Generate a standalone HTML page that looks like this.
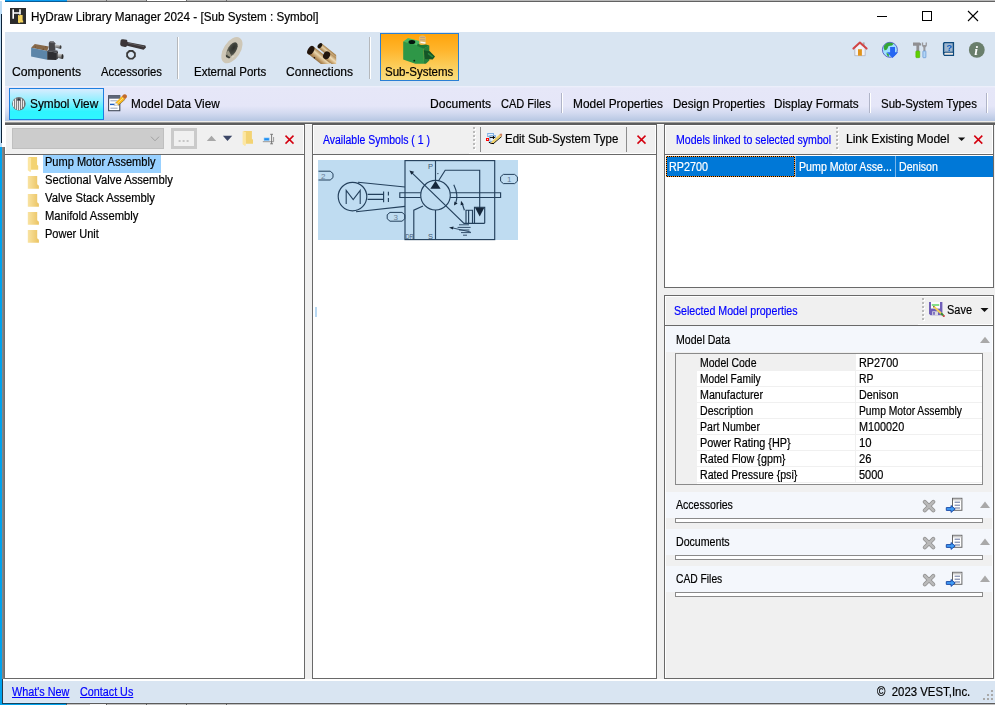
<!DOCTYPE html>
<html><head><meta charset="utf-8"><title>HyDraw Library Manager 2024</title>
<style>
html,body{margin:0;padding:0}
body{width:995px;height:705px;overflow:hidden;position:relative;background:#fff;font-family:"Liberation Sans",sans-serif;}
.a{position:absolute}
.t{-webkit-text-stroke:0.2px;position:absolute;white-space:pre;line-height:16px;height:16px;transform-origin:0 0;color:#000}
.s{font-size:12px}
.m{font-size:11px}
.pnl{position:absolute;border:1px solid #696969;box-sizing:border-box;background:#f0f0f0}
.pnl:before{content:"";position:absolute;left:0;top:0;right:0;bottom:0;border:1px solid #fff}
.wh{position:absolute;background:#fff}
.sec{position:absolute;left:666px;width:326px;height:26px;background:#f4f7fc}
.thin{position:absolute;left:675px;width:308px;height:5px;box-sizing:border-box;border:1px solid #8a8a8a;background:#fff}
.sepv{position:absolute;width:1px;background:#a8a8a8}
.sepv:after{content:"";position:absolute;left:1px;top:0;width:1px;height:100%;background:#fff}
.grip{position:absolute;width:2px;background-image:linear-gradient(#fff 50%,transparent 50%);background-size:2px 4px;margin:1px 0 0 1px}
.grip:after{content:"";position:absolute;left:-1px;top:-1px;width:2px;height:100%;background-image:linear-gradient(#bababa 50%,transparent 50%);background-size:2px 4px;}
</style></head><body>
<!-- window frame edges -->
<div class="a" style="left:5px;top:0;width:990px;height:1px;background:#b9b9b9"></div>
<div class="a" style="left:5px;top:1px;width:990px;height:1px;background:#626262"></div>
<div class="a" style="left:146px;top:0;width:40px;height:1px;background:#fff"></div>
<div class="a" style="left:106px;top:0;width:1px;height:1px;background:#6a6a6a;box-shadow:40px 0 #6a6a6a,80px 0 #6a6a6a,120px 0 #6a6a6a"></div>
<div class="a" style="left:5px;top:0;width:62px;height:2px;background:linear-gradient(#0a9bef 0,#0a9bef 1px,#0b5c96 1px,#0b5c96 2px)"></div>
<div class="a" style="left:0;top:1px;width:2px;height:146px;background:#bcdcf5"></div>
<div class="a" style="left:1px;top:14px;width:1px;height:129px;background:#0c2238"></div>
<div class="a" style="left:0;top:147px;width:2px;height:558px;background:#00a2ed"></div>
<div class="a" style="left:2px;top:147px;width:3px;height:532px;background:linear-gradient(90deg,#8c8c8c,#6a6a6a)"></div>
<div class="a" style="left:2px;top:679px;width:1px;height:25px;background:#2b3a46"></div>
<!-- toolbar 1 -->
<div class="a" style="left:5px;top:32px;width:990px;height:54px;background:#d9e5f2"></div>
<div class="a" style="left:380px;top:33px;width:79px;height:48px;box-sizing:border-box;border:1px solid #2a7fd4;background:linear-gradient(#ffa40c 0%,#ffb52c 35%,#fbd060 75%,#f9de80 100%)"></div>
<div class="sepv" style="left:177px;top:37px;height:42px;background:#b5b8bc"></div>
<div class="sepv" style="left:369px;top:37px;height:42px;background:#b5b8bc"></div>
<!-- toolbar 2 -->
<div class="a" style="left:5px;top:86px;width:990px;height:35px;background:linear-gradient(#eef1fb 0px,#e6e7f8 2px,#e5e6f8 20px,#d3daf0 27px,#b6c6e2 35px)"></div>
<div class="a" style="left:5px;top:121px;width:990px;height:1px;background:#f0eeea"></div>
<div class="a" style="left:5px;top:122px;width:990px;height:3px;background:linear-gradient(#9a9a9a 0,#9a9a9a 1px,#5c5c5c 1px,#5e5e5e 3px)"></div>
<div class="a" style="left:9px;top:88px;width:95px;height:32px;box-sizing:border-box;border:1px solid #1f7fe0;background:linear-gradient(#d8ecff 0%,#8ef0ff 40%,#2ff4ff 75%,#2ff6ff 100%)"></div>
<div class="sepv" style="left:561px;top:93px;height:20px;background:#b0b4c8"></div>
<div class="sepv" style="left:869px;top:93px;height:20px;background:#b0b4c8"></div>
<div class="sepv" style="left:986px;top:93px;height:20px;background:#b0b4c8"></div>
<!-- body -->
<div class="a" style="left:5px;top:125px;width:990px;height:554px;background:#f0f0f0"></div>
<div class="a" style="left:305px;top:124px;width:7px;height:1px;background:#fafafa"></div>
<div class="a" style="left:657px;top:124px;width:7px;height:1px;background:#fafafa"></div>
<!-- left panel -->
<div class="pnl" style="left:5px;top:124px;width:300px;height:555px;border-left:none;border-top-color:#5e5e5e"></div>
<div class="wh" style="left:5px;top:155px;width:299px;height:523px"></div>
<div class="a" style="left:5px;top:154px;width:299px;height:1px;background:#696969"></div>
<div class="a" style="left:12px;top:128px;width:152px;height:21px;box-sizing:border-box;border:1px solid #bfbfbf;background:#cccccc"></div>
<div class="a" style="left:171px;top:128px;width:26px;height:21px;box-sizing:border-box;border:3px solid #cacaca;background:#f0f0f0"></div>
<div class="a" style="left:43px;top:155px;width:118px;height:18px;background:#99d1ff"></div>
<!-- middle panel -->
<div class="pnl" style="left:312px;top:124px;width:345px;height:555px;border-top-color:#5e5e5e"></div>
<div class="wh" style="left:313px;top:155px;width:343px;height:523px"></div>
<div class="a" style="left:313px;top:154px;width:343px;height:1px;background:#696969"></div>
<div class="grip" style="left:473px;top:127px;height:24px"></div>
<div class="a" style="left:480px;top:127px;width:1px;height:25px;background:#8c8c8c"></div>
<div class="a" style="left:626px;top:127px;width:1px;height:25px;background:#8c8c8c"></div>
<!-- right upper panel -->
<div class="pnl" style="left:664px;top:124px;width:330px;height:164px;border-top-color:#5e5e5e"></div>
<div class="wh" style="left:665px;top:155px;width:328px;height:132px"></div>
<div class="a" style="left:665px;top:154px;width:328px;height:1px;background:#696969"></div>
<div class="grip" style="left:836px;top:127px;height:24px"></div>
<div class="a" style="left:666px;top:156px;width:327px;height:21px;background:#0078d7"></div>
<div class="a" style="left:666px;top:156px;width:129px;height:1px;background:repeating-linear-gradient(90deg,#ff9326 0,#ff9326 1px,#000 1px,#000 2px)"></div><div class="a" style="left:666px;top:176px;width:129px;height:1px;background:repeating-linear-gradient(90deg,#ff9326 0,#ff9326 1px,#000 1px,#000 2px)"></div><div class="a" style="left:666px;top:156px;width:1px;height:21px;background:repeating-linear-gradient(#ff9326 0,#ff9326 1px,#000 1px,#000 2px)"></div><div class="a" style="left:794px;top:156px;width:1px;height:21px;background:repeating-linear-gradient(#ff9326 0,#ff9326 1px,#000 1px,#000 2px)"></div>
<div class="a" style="left:795px;top:156px;width:1px;height:21px;background:#7ab6ea"></div>
<div class="a" style="left:895px;top:156px;width:1px;height:21px;background:#7ab6ea"></div>
<!-- right lower panel -->
<div class="pnl" style="left:664px;top:295px;width:330px;height:384px"></div>
<div class="a" style="left:665px;top:325px;width:328px;height:1px;background:#696969"></div>
<div class="grip" style="left:922px;top:298px;height:24px"></div>
<div class="sec" style="top:326px"></div>
<div class="sec" style="top:492px"></div>
<div class="sec" style="top:529px"></div>
<div class="sec" style="top:566px"></div>
<div class="a" style="left:666px;top:353px;width:326px;height:139px;background:#f0f0f0"></div>
<!-- property grid -->
<div class="a" style="left:675px;top:353px;width:308px;height:132px;box-sizing:border-box;border:1px solid #8a8a8a;background:#f0f0f0"></div>
<div class="wh" style="left:697px;top:371px;width:285px;height:113px;background:repeating-linear-gradient(#fff 0,#fff 15px,#f0f0f0 15px,#f0f0f0 16px)"></div>
<div class="a" style="left:855px;top:354px;width:1px;height:129px;background:#f0f0f0"></div>
<div class="wh" style="left:856px;top:354px;width:126px;height:16px"></div>
<div class="thin" style="top:518px"></div>
<div class="thin" style="top:555px"></div>
<div class="thin" style="top:592px"></div>
<div class="a" style="left:666px;top:523px;width:326px;height:6px;background:#f0f0f0"></div>
<div class="a" style="left:666px;top:560px;width:326px;height:6px;background:#f0f0f0"></div>
<div class="a" style="left:666px;top:597px;width:326px;height:81px;background:#f0f0f0"></div>
<div class="a" style="left:469px;top:153px;width:187px;height:1px;background:#fff"></div>
<div class="a" style="left:832px;top:153px;width:161px;height:1px;background:#fff"></div>
<div class="a" style="left:918px;top:324px;width:75px;height:1px;background:#fff"></div>
<div class="a" style="left:315px;top:307px;width:2px;height:10px;background:#b9d9f3"></div>
<!-- status bar -->
<div class="a" style="left:3px;top:679px;width:992px;height:2px;background:#fff"></div>
<div class="a" style="left:3px;top:681px;width:992px;height:22px;background:#d9e5f2"></div>
<div class="a" style="left:3px;top:702px;width:992px;height:1px;background:#dde9f8"></div>
<div class="a" style="left:2px;top:703px;width:993px;height:1px;background:#5c5c5c"></div>
<div class="a" style="left:2px;top:703px;width:65px;height:1px;background:#14465f"></div>
<div class="a" style="left:0;top:704px;width:67px;height:1px;background:#00a2ed"></div>
<div class="a" style="left:67px;top:704px;width:928px;height:1px;background:#c2c2c2"></div>
<div class="a" style="left:90px;top:704px;width:16px;height:1px;background:#f4f4f4"></div>
<div class="a" style="left:106px;top:704px;width:1px;height:1px;background:#5e5e5e;box-shadow:40px 0 #5e5e5e,80px 0 #5e5e5e,120px 0 #5e5e5e,-40px 0 #5e5e5e"></div>
<svg class="a" style="left:0;top:0" width="995" height="705" viewBox="0 0 995 705">
<defs>
<filter id="b3" x="-20%" y="-20%" width="140%" height="140%"><feGaussianBlur stdDeviation="0.35"/></filter>
<filter id="b5" x="-20%" y="-20%" width="140%" height="140%"><feGaussianBlur stdDeviation="0.5"/></filter>
<linearGradient id="fold" x1="0" y1="0" x2="1" y2="1"><stop offset="0" stop-color="#fbe39a"/><stop offset="1" stop-color="#efc659"/></linearGradient>
<linearGradient id="brz" x1="0" y1="0" x2="0.3" y2="1"><stop offset="0" stop-color="#b8925e"/><stop offset="0.45" stop-color="#e6cfa6"/><stop offset="1" stop-color="#b48a55"/></linearGradient>
<linearGradient id="slv" x1="0" y1="0" x2="0" y2="1"><stop offset="0" stop-color="#d8d8d8"/><stop offset="0.6" stop-color="#8a8a8a"/><stop offset="1" stop-color="#3a3a3a"/></linearGradient>
<linearGradient id="foldh" x1="0" y1="0" x2="1" y2="0"><stop offset="0" stop-color="#f9e3a2"/><stop offset="1" stop-color="#ebc463"/></linearGradient>
<g id="folder"><path d="M0.8 0.3 H9.3 V8 L10.4 9 V13 H3.3 Z" fill="#f3d373"/><path d="M0 0.4 L3.3 1.3 V13.4 L2.7 15.4 L0 13.4 Z" fill="#fce6a2"/></g>
<g id="folderc"><path d="M0 0 H9.4 V8.2 L11.1 9.7 V12.8 H0 Z" fill="url(#foldh)"/></g>
<g id="redx"><path d="M0.6 0.6 L8.6 8.6 M8.6 0.6 L0.6 8.6" stroke="#d4000f" stroke-width="1.5" fill="none"/></g>
<g id="grayx"><path d="M2 2 L10.5 10.5 M10.5 2 L2 10.5" stroke="#8e8e8e" stroke-width="4" stroke-linecap="round" fill="none"/><path d="M2 2 L10.5 10.5 M10.5 2 L2 10.5" stroke="#b9b9b9" stroke-width="2.6" stroke-linecap="round" fill="none"/></g>
<g id="adddoc"><rect x="6.5" y="0.7" width="9.4" height="12" fill="#fff" stroke="#666" stroke-width="1"/><rect x="7" y="1.2" width="8.4" height="1.6" fill="#c8c8c8"/><path d="M8.6 4.6 H14 M8.6 7.6 H14 M8.6 10.4 H14" stroke="#62709a" stroke-width="1"/><path d="M0.3 10 H5 V8 L9.2 11.4 L5 14.8 V12.8 H0.3 Z" fill="#3f9cf5" stroke="#1542a0" stroke-width="0.9"/></g>
<g id="uptri"><path d="M0 6.4 L5 0 L10 6.4 Z" fill="#a9a9a9"/></g>
</defs>

<!-- app icon -->
<rect x="10" y="8" width="16" height="16" fill="#2b2b2b"/>
<path d="M13.2 9.2 V18.8 M20 9.2 V14.4 M13.2 13 H20.6" stroke="#fff" stroke-width="1.6" fill="none" filter="url(#b3)"/>
<path d="M18 15 L20.4 15.6 V22.2 L19.4 23.2 L18 22.4 Z M20 15 H22.6 V20.4 H23.2 V22.4 H20 Z" fill="#f3d35f" filter="url(#b3)"/>
<!-- window buttons -->
<path d="M877 16.5 H887" stroke="#000" stroke-width="1"/>
<rect x="922.5" y="11.5" width="9" height="9" fill="none" stroke="#000" stroke-width="1"/>
<path d="M968 11 L978 21 M978 11 L968 21" stroke="#000" stroke-width="1.1" fill="none"/>

<!-- Components icon -->
<g filter="url(#b3)">
<path d="M31.1 47.7 L34.8 44 L48.8 46.4 L47.2 51 Z" fill="#86684a"/>
<path d="M31.1 47.7 L47.2 51 V59.7 L31.1 56.6 Z" fill="#5b85a8"/>
<circle cx="45.8" cy="46.8" r="0.6" fill="#6a4c30"/><circle cx="43.4" cy="49.2" r="0.6" fill="#6a4c30"/><circle cx="35.4" cy="47" r="0.6" fill="#6a4c30"/>
<path d="M48.8 43 L49.8 41.4 L53.6 41.4 L55.2 43.2 L55.4 50.6 L48.8 51 Z" fill="#45454a"/>
<path d="M49.8 41.4 L53.6 41.4 L55.2 43.2 L50.4 43 Z" fill="#6a6a70"/>
<path d="M47.2 51 L49 49.8 L57.4 50.6 L58 52.2 L56 52.6 Z" fill="#505054"/>
<path d="M47.2 51 L56 52.4 V60 L47.2 59.7 Z" fill="#2f2f32"/>
<path d="M56 52.4 L58 51.8 V58.6 L56 60 Z" fill="#3c3c3f"/>
<path d="M54.8 44.2 L60.6 45.4 L60.2 48.8 L55 47.6 Z" fill="url(#slv)"/>
<ellipse cx="60.6" cy="47.1" rx="0.9" ry="1.9" fill="#3a3a3a"/>
<path d="M57.6 53.2 L62.6 54.2 L62.2 59 L57.6 57.8 Z" fill="url(#slv)"/>
<ellipse cx="62.5" cy="56.6" rx="1" ry="2.5" fill="#2c2c2c"/>
</g>
<!-- Accessories icon -->
<g filter="url(#b3)">
<path d="M120.6 40.4 Q121 39 123 39.2 L126.6 39.8 Q127.6 40.4 127.4 42 L145.4 45.6 L146 47.6 L143.6 49.8 L127 45.8 Q126.4 47.2 125 47 L121.6 46.2 Q120 45.6 120.2 44 Z" fill="#3a3638"/>
<path d="M128 43 L144 46.6" stroke="#6a6466" stroke-width="0.8"/>
<path d="M135.8 56.8 L133 59.6 H129 L126.2 56.8 V52.8 L129 50 H133 L135.8 52.8 Z M131 51.7 A3.1 3.1 0 1 0 131.01 51.7 Z" fill="#3b3b3b" fill-rule="evenodd"/>
</g>
<!-- External Ports icon -->
<radialGradient id="hole" cx="0.55" cy="0.35" r="0.7"><stop offset="0" stop-color="#2e302a"/><stop offset="0.6" stop-color="#4a4c44"/><stop offset="1" stop-color="#8a8878"/></radialGradient>
<g filter="url(#b5)">
<ellipse cx="231.9" cy="50.2" rx="8.4" ry="14.6" transform="rotate(33 231.9 50.2)" fill="#cec7b7"/>
<ellipse cx="232" cy="49.6" rx="4.2" ry="8.3" transform="rotate(33 232 49.6)" fill="url(#hole)"/>
<path d="M226.2 52.6 L228.6 50.6 L231.4 55.8 L228.6 56.8 Z" fill="#9a9684"/>
<path d="M225.8 54.6 L230.6 57.6 L229 58.4 L226 57 Z" fill="#3a3c34"/>
<path d="M232.4 55.4 L234.6 56.2 L232 58 Z" fill="#dcd6c6"/>
</g>
<!-- Connections icon -->
<clipPath id="cclip"><rect x="300" y="40" width="36.2" height="24"/></clipPath>
<linearGradient id="tg1" gradientUnits="userSpaceOnUse" x1="313.7" y1="46.8" x2="307.9" y2="53.8"><stop offset="0" stop-color="#a8824e"/><stop offset="0.35" stop-color="#ead6ae"/><stop offset="0.7" stop-color="#c09a66"/><stop offset="1" stop-color="#8c6a3c"/></linearGradient>
<linearGradient id="tg2" gradientUnits="userSpaceOnUse" x1="321.8" y1="43.4" x2="318" y2="47.8"><stop offset="0" stop-color="#a8824e"/><stop offset="0.4" stop-color="#e6d0a6"/><stop offset="1" stop-color="#9a7646"/></linearGradient>
<linearGradient id="tg3" gradientUnits="userSpaceOnUse" x1="329.2" y1="52.2" x2="324" y2="58.4"><stop offset="0" stop-color="#b08a56"/><stop offset="0.4" stop-color="#f0dcb6"/><stop offset="0.75" stop-color="#c8a470"/><stop offset="1" stop-color="#94703f"/></linearGradient>
<g filter="url(#b3)" clip-path="url(#cclip)">
<path d="M318 47.8 L321.8 43.4 L340 58 L336 62.8 Z" fill="url(#tg2)"/>
<path d="M307.9 53.8 L313.7 46.8 L332 61 L326 68 Z" fill="url(#tg1)"/>
<path d="M324 58.4 L329.2 52.2 L342 62 L337 68 Z" fill="url(#tg3)"/>
<ellipse cx="310.8" cy="50.3" rx="3" ry="4.8" transform="rotate(32 310.8 50.3)" fill="#24170f"/>
<ellipse cx="319.9" cy="45.6" rx="1.9" ry="2.9" transform="rotate(38 319.9 45.6)" fill="#1d130c"/>
<ellipse cx="326.6" cy="55.3" rx="3.3" ry="4.1" transform="rotate(30 326.6 55.3)" fill="#24170f"/>
<circle cx="314.4" cy="57.8" r="0.8" fill="#1d130c"/>
</g>
<!-- Sub-Systems icon -->
<g filter="url(#b3)">
<path d="M403.2 41.6 L408 38 L420.6 41.2 L418.6 44.8 L429.3 46 L423.6 48.6 Z" fill="#4cb763"/>
<path d="M403.2 41.6 L417 45.2 L423.6 48.6 L424 63.8 H415.3 L403.2 59.5 Z" fill="#2e9747"/>
<path d="M417.6 43.6 L421 45 L426 44.4 L429.3 45.6 L423.6 48.8 L417 46 Z" fill="#1f7836"/>
<path d="M423.6 48.6 L429.3 45.6 V60.5 L425.9 63.8 H424 Z" fill="#27803b"/>
<ellipse cx="411.9" cy="42" rx="3.4" ry="2" fill="#04150a"/>
<path d="M419 37 Q422.4 34.2 425.8 37 V43.6 Q422.4 45.4 419.2 43.4 Z" fill="#e5bd68"/>
<path d="M420.2 37.4 H425 M420 39.8 H425.2" stroke="#b9988a" stroke-width="0.9"/>
<path d="M420.4 42.2 L425.4 43" stroke="#fffdf2" stroke-width="1.3"/>
<path d="M423.8 50.3 L429.8 51.3 L435 56.6 L432.7 59.5 L425 59 Z" fill="#125526"/>
<path d="M428 53.4 L432.8 57" stroke="#2a8a40" stroke-width="1.5"/>
<circle cx="414.3" cy="60.7" r="0.9" fill="#07240f"/>
</g>
<!-- right toolbar icons: home -->
<g filter="url(#b3)">
<rect x="862.8" y="42.4" width="1.8" height="3.6" fill="#a9a9ad"/>
<path d="M854.8 48 L859.9 43.4 L865.2 48 V55.7 H854.8 Z" fill="#f2f2f8" stroke="#aeb0ba" stroke-width="0.8"/>
<rect x="858" y="49.2" width="3.9" height="6.5" fill="#e0941f"/>
<path d="M853.4 48.6 L859.9 42.6 L866.6 48.6" stroke="#d24444" stroke-width="2" fill="none" stroke-linecap="round" stroke-linejoin="round"/>
</g>
<!-- globe -->
<g filter="url(#b3)">
<circle cx="889.9" cy="49.8" r="7.5" fill="#9fe0ff" stroke="#5356c4" stroke-width="0.9"/>
<path d="M884.2 45.4 Q886 42.6 889.6 42.6 L893.8 43.6 L892 45.6 L888.6 46 L887 49.6 L884.6 50.4 Q883 48 884.2 45.4 Z M886.4 52.4 L889 54.6 L888.6 57 Q886.4 55.6 886.4 52.4 Z" fill="#35a535"/>
<path d="M890.1 47 H895 V52.3 H898 L892.5 58 L886.8 52.3 H890.1 Z" fill="#2766f2"/>
</g>
<!-- tools -->
<g filter="url(#b3)">
<path d="M913 42.6 H919.6 L921.2 43.8 V45.6 H919.2 V50.9 H916.4 V45.8 H913 Z" fill="#8f8f92"/>
<rect x="915.8" y="50.9" width="4" height="6.8" rx="0.8" fill="#5fd100" stroke="#4aa800" stroke-width="0.5"/>
<path d="M921.8 42.4 Q921.6 46 923.4 47.4 V51 H925.4 V47.4 Q927.4 46 927 42.4 L925.6 42.4 V45 H923.2 V42.4 Z" fill="#98989c"/>
<rect x="922.9" y="51" width="3" height="6.7" rx="0.6" fill="#b4d6f6" stroke="#5f92d4" stroke-width="0.7"/>
</g>
<!-- help book -->
<g filter="url(#b3)">
<path d="M944.4 42.6 H953.4 V55.4 H944.6 Q943.6 54.6 943.6 53.6 V43.4 Z" fill="#9fb7cf" stroke="#114a7c" stroke-width="1.4"/>
<rect x="944.4" y="52.6" width="8.6" height="1.9" fill="#f0e6de"/>
<path d="M943.6 54 Q943.8 52.4 945 52.2 H953.4" stroke="#114a7c" stroke-width="1" fill="none"/>
<text x="946.4" y="51" font-family="Liberation Sans, sans-serif" font-weight="bold" font-size="9.5" fill="#125fc4">?</text>
</g>
<!-- info -->
<g filter="url(#b3)">
<circle cx="976.8" cy="49.9" r="7.9" fill="#6b7f6c"/>
<text x="974.3" y="55.2" font-family="Liberation Serif, serif" font-style="italic" font-weight="bold" font-size="13.5" fill="#fff">i</text>
</g>

<!-- Symbol View icon -->
<g filter="url(#b3)">
<circle cx="18.9" cy="103.7" r="6.8" fill="#737373"/>
<path d="M13.5 100.6 V106.8 M15.4 98.6 V108.8 M17.4 100.4 V110 M19.4 100.4 V110 M21.4 98.6 V108.8 M23.4 100.6 V106.8" stroke="#fff" stroke-width="0.95"/>
<path d="M17 100.4 L18.9 98 L20.8 100.4 Z" fill="#333a44"/>
</g>
<!-- Model Data View icon -->
<g filter="url(#b3)">
<rect x="108.6" y="95.7" width="11.2" height="15" fill="#fff" stroke="#414959" stroke-width="1.1"/>
<rect x="108.6" y="95.7" width="11.2" height="3" fill="#5d6679"/>
<path d="M110.4 100.8 H117.6 M110.4 108.2 H117.6" stroke="#97a2b8" stroke-width="1"/>
<path d="M110 104.4 H114.6" stroke="#1a5fc4" stroke-width="1.4"/>
<path d="M115.6 102.4 L121.8 96.2 L125 99.2 L118.4 105.2 Z" fill="#f9b91e"/>
<path d="M117 103.8 L123.4 97.7" stroke="#fde08a" stroke-width="0.9"/>
<path d="M114.2 105.6 L115.6 102.4 L118.4 105.2 Z" fill="#f6f6f6" stroke="#8a8a8a" stroke-width="0.4"/>
<path d="M121.8 96.2 L123.6 94.4 Q125.6 93.8 126.8 95.6 Q127.2 97 126.6 97.6 L125 99.2 Z" fill="#c26a2a"/>
<path d="M118.4 105.4 L125.2 99.2" stroke="#5a3a10" stroke-width="0.5"/>
</g>

<!-- left panel toolbar icons -->
<path d="M151 136.7 L155 140.8 L159 136.7" stroke="#a0a0a0" stroke-width="1" fill="none"/>
<path d="M178.6 141 h2 m2 0 h2 m2 0 h2" stroke="#9a9a9a" stroke-width="1.1" fill="none"/>
<path d="M206.8 141.1 L211.5 135.7 L216.2 141.1 Z" fill="#a8a8a8"/>
<path d="M222.9 135.7 H232.2 L227.5 141.1 Z" fill="#3b4666"/>
<use href="#folder" x="242.6" y="130.8" filter="url(#b3)"/>
<g filter="url(#b3)">
<rect x="264" y="137.9" width="5.2" height="2.8" fill="#1f8ef0" stroke="#9fd0fa" stroke-width="0.6"/>
<path d="M262.8 141.7 H273.6 V137" stroke="#8f8f8f" stroke-width="0.9" fill="none"/>
<path d="M270.2 134.3 H273 M271.6 134.3 V143.8 M270.2 143.8 H273" stroke="#6e6e6e" stroke-width="0.9" fill="none"/>
</g>
<use href="#redx" x="284.9" y="135"/>
<use href="#redx" x="636.9" y="135"/>
<use href="#redx" x="973.7" y="135"/>
<path d="M958 137.4 H965.2 L961.6 141 Z" fill="#111"/>
<path d="M980.5 307.9 H988.5 L984.5 312 Z" fill="#111"/>
<!-- tree folders -->
<use href="#folder" x="27.8" y="156.8" filter="url(#b3)"/>
<use href="#folderc" x="27.8" y="176" filter="url(#b3)"/>
<use href="#folderc" x="27.8" y="194" filter="url(#b3)"/>
<use href="#folderc" x="27.8" y="212" filter="url(#b3)"/>
<use href="#folderc" x="27.8" y="230" filter="url(#b3)"/>

<!-- edit sub-system icon -->
<g filter="url(#b3)">
<rect x="487.7" y="133.5" width="5.8" height="3" fill="#e8f2fc" stroke="#7fb0e2" stroke-width="1"/>
<rect x="489.8" y="135.6" width="5.6" height="5.8" fill="#e8f2fc" stroke="#7fb0e2" stroke-width="1"/>
<rect x="486" y="138" width="3" height="3" fill="#f00"/><rect x="487.1" y="139.1" width="0.9" height="0.9" fill="#fff"/>
<path d="M489.8 137.4 H495 M493.4 136 V139" stroke="#000" stroke-width="1"/>
<path d="M490.4 143.4 L492.2 141 L499.6 134.6 L501.4 136.4 L493.6 143.2 Z" fill="#efd069"/>
<path d="M493.4 143.6 L501.6 136.6" stroke="#111" stroke-width="0.9"/>
<path d="M499.4 134.6 L500.8 133.6 Q502 133.6 502.4 135 L501.4 136.4 Z" fill="#d0805c"/>
<path d="M488.8 142.2 Q491 144 494 143.6" stroke="#000" stroke-width="1" fill="none"/>
</g>
<!-- save icon -->
<g filter="url(#b3)">
<path d="M929 302 H942.4 V315.2 H930.4 L929 313.8 Z" fill="#705fb9"/>
<rect x="931" y="302" width="9" height="6.6" fill="#fbfbfd"/>
<rect x="931.8" y="304" width="7.4" height="2" fill="#86e089"/>
<rect x="932.2" y="311.3" width="5.8" height="4" fill="#d9d9e2"/>
<rect x="933.2" y="312" width="1.6" height="2.8" fill="#705fb9"/>
<path d="M933 306 L934.8 306.2 L943.8 314.6 L942.4 316 L933.6 307.8 Z" fill="#f2cd55"/>
<path d="M933 306 L934.8 306.2 L933.6 307.8 Z" fill="#7a5a3a"/>
<path d="M941.6 312.6 L943.8 314.6 L942.4 316 L940.4 314 Z" fill="#2f8a3f"/>
<circle cx="943.8" cy="316" r="1.1" fill="#c03838"/>
</g>
<!-- section icons -->
<use href="#uptri" x="980" y="336.7"/>
<g filter="url(#b3)"><use href="#grayx" x="922.8" y="499.8"/><use href="#adddoc" x="946" y="497.6"/></g>
<use href="#uptri" x="980" y="501.6"/>
<g filter="url(#b3)"><use href="#grayx" x="922.8" y="536.8"/><use href="#adddoc" x="946" y="534.6"/></g>
<use href="#uptri" x="980" y="538.6"/>
<g filter="url(#b3)"><use href="#grayx" x="922.8" y="573.8"/><use href="#adddoc" x="946" y="571.6"/></g>
<use href="#uptri" x="980" y="575.6"/>
<!-- size grip -->
<g fill="#a9a9a9"><rect x="991" y="690" width="2" height="2"/><rect x="987" y="694" width="2" height="2"/><rect x="991" y="694" width="2" height="2"/><rect x="983" y="698" width="2" height="2"/><rect x="987" y="698" width="2" height="2"/><rect x="991" y="698" width="2" height="2"/></g>
<!--SYMBOL_START--><!-- schematic symbol -->
<rect x="318" y="160" width="200" height="80" fill="#bfdcf1"/>
<g fill="none" stroke="#24405c" stroke-width="1.15" stroke-linejoin="miter">
<rect x="405" y="160.6" width="89.7" height="79"/>
<circle cx="352.5" cy="196.6" r="14.3"/>
<path d="M346.2 204 V190.4 L353.2 199.6 L360.2 190.4 V204" stroke-width="1.1"/>
<path d="M367.6 194.3 H383.6 M367.6 199.4 H383.6 M383.6 191.6 V202.2" />
<path d="M388.4 191.8 V195.4 M388.4 198 V202"/>
<path d="M358 182.3 L405 187 M356 211.7 L405 206.4"/>
<path d="M420.8 192.7 H399.8 V197.5 H420.8"/>
<path d="M450.2 192.7 H500.6 V197.5 H450.2"/>
<circle cx="435.5" cy="195.2" r="14.8"/>
<path d="M435.5 160.6 V181 M435.5 210 V239.6"/>
<path d="M413.8 239.6 V210.2 L423 206"/>
<path d="M411.2 172.2 L464 223.3 H484.7"/>
<path d="M438.4 181 L445.2 170.2 H479.7 V208"/>
<path d="M466 223.3 V210.2 H472.5 V223.3 M468.6 210.2 V223.3"/>
<path d="M474.5 223.3 V207.2 H484.7 V223.3"/>
<path d="M453.8 184.8 Q458.8 195 455.6 203.6" />
<path d="M464.4 210.2 L462 203" />
<path d="M459 224.8 H469 M457.6 227.4 H470.6 M459 230 H469.4 M461 232.6 H471 M463 235.2 H467" stroke-width="0.9"/>
<path d="M470.5 232 L452 227.8" stroke-width="0.9"/>
<path d="M318.5 171.2 H330.2 L333 173.6 V177.6 L330.2 180 H318.5" stroke-width="1"/>
<path d="M390 212.4 H402 L404.8 214.8 V218.8 L402 221.2 H390 L387.2 218.8 V214.8 Z" stroke-width="1"/>
<path d="M503.4 174.4 H514.6 L517.4 176.8 V181.2 L514.6 183.6 H503.4 L500.6 181.2 V176.8 Z" stroke-width="1"/>
</g>
<g fill="#16283c" stroke="none">
<path d="M435.5 180.8 L440.6 188.8 H430.4 Z"/>
<path d="M409.4 170.4 L414.2 171.8 L411.4 174.8 Z"/>
<path d="M474.9 207.4 H484.4 L479.7 216.4 Z"/>
<path d="M454 205.6 L454.4 201.4 L457.6 203.4 Z"/>
<path d="M461 200.8 L463.8 204.4 L460.6 205.2 Z"/>
<path d="M449 227.6 L453.6 226.4 L452.8 229.4 Z"/>
<circle cx="437.9" cy="173.6" r="0.6"/>
</g>
<g font-family="Liberation Sans, sans-serif" fill="#3c5672" font-size="8">
<text x="428" y="169" textLength="5" lengthAdjust="spacingAndGlyphs">P</text>
<text x="428" y="239" textLength="5" lengthAdjust="spacingAndGlyphs">S</text>
<text x="405.6" y="239" textLength="8" lengthAdjust="spacingAndGlyphs">DR</text>
<text x="321" y="179" fill="#6a7f96">2</text>
<text x="393.6" y="220" fill="#6a7f96">3</text>
<text x="507" y="182.2" fill="#6a7f96">1</text>
</g>
<clipPath id="symclip"><rect x="318" y="160" width="200" height="80"/></clipPath>
<!--SYMBOL_END-->
</svg>

<span class="t s" style="left:31.10px;top:9px;transform:scaleX(0.9735);">HyDraw Library Manager 2024 - [Sub System : Symbol]</span>
<span class="t s" style="left:12.12px;top:64px;transform:scaleX(1.0161);">Components</span>
<span class="t s" style="left:100.52px;top:64px;transform:scaleX(0.9431);">Accessories</span>
<span class="t s" style="left:194.22px;top:64px;transform:scaleX(0.9570);">External Ports</span>
<span class="t s" style="left:286.17px;top:64px;transform:scaleX(1.0061);">Connections</span>
<span class="t s" style="left:385.09px;top:64px;transform:scaleX(0.9569);">Sub-Systems</span>
<span class="t s" style="left:29.97px;top:96px;transform:scaleX(0.9867);">Symbol View</span>
<span class="t s" style="left:131.09px;top:96px;transform:scaleX(0.9799);">Model Data View</span>
<span class="t s" style="left:430.03px;top:96px;transform:scaleX(1.0078);">Documents</span>
<span class="t s" style="left:500.87px;top:96px;transform:scaleX(0.9193);">CAD Files</span>
<span class="t s" style="left:572.56px;top:96px;transform:scaleX(0.9907);">Model Properties</span>
<span class="t s" style="left:673.16px;top:96px;transform:scaleX(0.9657);">Design Properties</span>
<span class="t s" style="left:774.12px;top:96px;transform:scaleX(0.9774);">Display Formats</span>
<span class="t s" style="left:880.57px;top:96px;transform:scaleX(0.9542);">Sub-System Types</span>
<span class="t s" style="left:505.21px;top:131px;transform:scaleX(0.9561);">Edit Sub-System Type</span>
<span class="t s" style="left:846.03px;top:131px;transform:scaleX(1.0008);">Link Existing Model</span>
<span class="t s" style="left:947.18px;top:302px;transform:scaleX(0.9140);">Save</span>
<span class="t s" style="left:45.33px;top:154px;transform:scaleX(0.9198);">Pump Motor Assembly</span>
<span class="t s" style="left:45.33px;top:172px;transform:scaleX(0.9365);">Sectional Valve Assembly</span>
<span class="t s" style="left:45.33px;top:190px;transform:scaleX(0.9383);">Valve Stack Assembly</span>
<span class="t s" style="left:45.33px;top:208px;transform:scaleX(0.9323);">Manifold Assembly</span>
<span class="t s" style="left:45.33px;top:226px;transform:scaleX(0.9176);">Power Unit</span>
<span class="t s" style="left:322.99px;top:132px;transform:scaleX(0.8735);color:#0000ff;">Available Symbols ( 1 )</span>
<span class="t s" style="left:675.54px;top:132px;transform:scaleX(0.8801);color:#0000ff;">Models linked to selected symbol</span>
<span class="t s" style="left:674.31px;top:303px;transform:scaleX(0.8861);color:#0000ff;">Selected Model properties</span>
<span class="t s" style="left:669.36px;top:159px;transform:scaleX(0.8984);color:#fff;">RP2700</span>
<span class="t s" style="left:798.88px;top:159px;transform:scaleX(0.8869);color:#fff;">Pump Motor Asse...</span>
<span class="t s" style="left:898.91px;top:159px;transform:scaleX(0.8804);color:#fff;">Denison</span>
<span class="t s" style="left:675.54px;top:332px;transform:scaleX(0.8805);">Model Data</span>
<span class="t s" style="left:700.37px;top:355px;transform:scaleX(0.8735);">Model Code</span>
<span class="t s" style="left:858.92px;top:355px;transform:scaleX(0.9048);">RP2700</span>
<span class="t s" style="left:700.37px;top:371px;transform:scaleX(0.8481);">Model Family</span>
<span class="t s" style="left:858.92px;top:371px;transform:scaleX(0.8639);">RP</span>
<span class="t s" style="left:700.37px;top:387px;transform:scaleX(0.8917);">Manufacturer</span>
<span class="t s" style="left:858.92px;top:387px;transform:scaleX(0.8944);">Denison</span>
<span class="t s" style="left:700.37px;top:403px;transform:scaleX(0.8838);">Description</span>
<span class="t s" style="left:858.92px;top:403px;transform:scaleX(0.8579);">Pump Motor Assembly</span>
<span class="t s" style="left:700.37px;top:419px;transform:scaleX(0.8808);">Part Number</span>
<span class="t s" style="left:858.92px;top:419px;transform:scaleX(0.9023);">M100020</span>
<span class="t s" style="left:700.37px;top:435px;transform:scaleX(0.9055);">Power Rating {HP}</span>
<span class="t s" style="left:858.92px;top:435px;transform:scaleX(0.9457);">10</span>
<span class="t s" style="left:700.37px;top:451px;transform:scaleX(0.8955);">Rated Flow {gpm}</span>
<span class="t s" style="left:858.92px;top:451px;transform:scaleX(0.9337);">26</span>
<span class="t s" style="left:700.37px;top:467px;transform:scaleX(0.8841);">Rated Pressure {psi}</span>
<span class="t s" style="left:858.92px;top:467px;transform:scaleX(0.9165);">5000</span>
<span class="t s" style="left:675.54px;top:497px;transform:scaleX(0.8794);">Accessories</span>
<span class="t s" style="left:675.54px;top:534px;transform:scaleX(0.8844);">Documents</span>
<span class="t s" style="left:675.54px;top:571px;transform:scaleX(0.8559);">CAD Files</span>
<span class="t s" style="left:12.12px;top:684px;transform:scaleX(0.9020);color:#0000ff;text-decoration:underline;">What&#x27;s New</span>
<span class="t s" style="left:80.44px;top:684px;transform:scaleX(0.8977);color:#0000ff;text-decoration:underline;">Contact Us</span>
<span class="t s" style="left:876.94px;top:684px;transform:scaleX(0.9495);">©  2023 VEST,Inc.</span>
</body></html>
